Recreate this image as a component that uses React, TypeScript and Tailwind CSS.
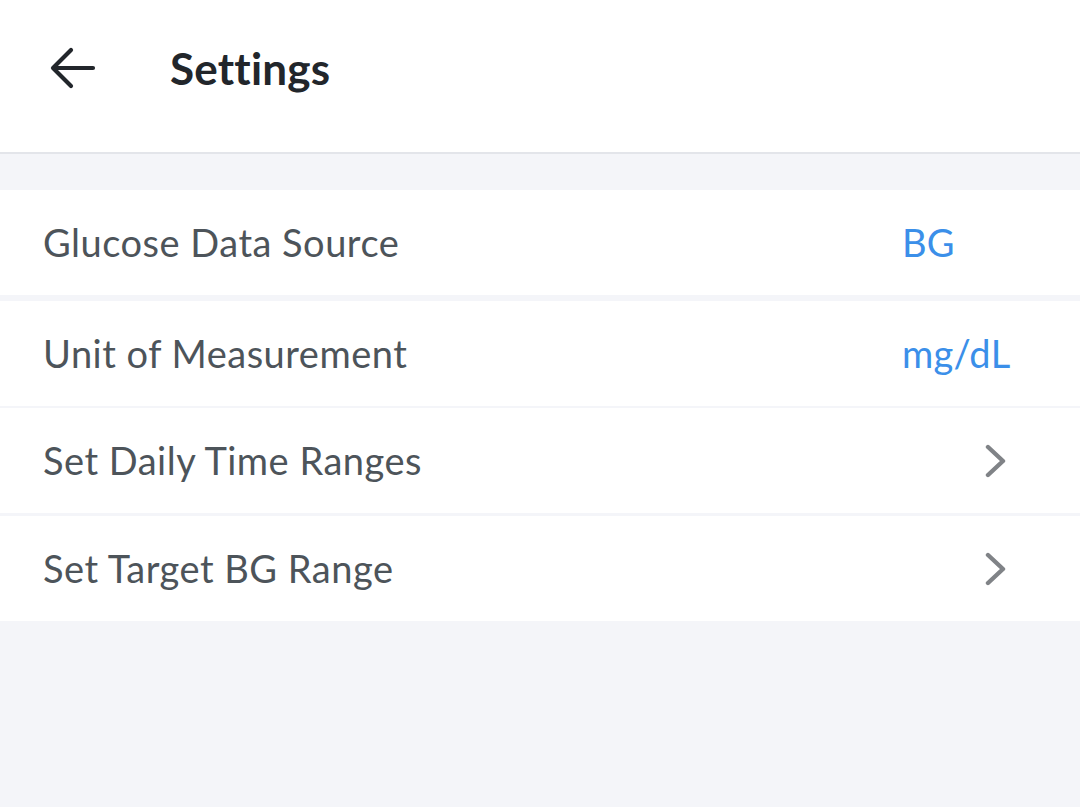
import React from 'react';

type Row = {
  label: string;
  value?: string;
};

const rows: Row[] = [
  { label: 'Glucose Data Source', value: 'BG' },
  { label: 'Unit of Measurement', value: 'mg/dL' },
  { label: 'Set Daily Time Ranges' },
  { label: 'Set Target BG Range' },
];

const BackArrow = () => (
  <svg width="46" height="42" viewBox="0 0 46 42" fill="none" aria-hidden="true">
    <path
      d="M43 21H4M21 3L3 21l18 18"
      stroke="#22262b"
      strokeWidth="4.2"
      strokeLinecap="round"
      strokeLinejoin="round"
    />
  </svg>
);

const Chevron = () => (
  <svg width="22" height="34" viewBox="0 0 22 34" fill="none" aria-hidden="true">
    <path
      d="M3 3l15 14L3 31"
      stroke="#808387"
      strokeWidth="4.4"
      strokeLinecap="round"
      strokeLinejoin="round"
    />
  </svg>
);

// Gap heights between the setting rows, as in the screen
const gaps = ['h-[6px]', 'h-[2px]', 'h-[3px]'];

export default function App() {
  return (
    <div className="w-[1080px] h-[807px] bg-[#f4f5f9] font-['Lato',sans-serif] overflow-hidden">
      <header className="h-[154px] bg-white border-b-2 border-[#e3e5ea] flex items-center">
        <button className="ml-[50px] mt-[-16px] flex items-center" aria-label="Back">
          <BackArrow />
        </button>
        <h1 className="ml-[74px] mt-[-16px] text-[44px] font-bold text-[#22262b] tracking-[0.2px]">
          Settings
        </h1>
      </header>

      <div className="mt-[36px]">
        {rows.map((row, i) => (
          <React.Fragment key={row.label}>
            <div className="h-[105px] bg-white flex items-center pl-[43px] pr-[74px]">
              <span className="flex-1 text-[38px] text-[#4d545a] tracking-[0.5px]">{row.label}</span>
              {row.value ? (
                <span className="w-[104px] text-[38px] text-[#3b8fe9] tracking-[0.3px]">{row.value}</span>
              ) : (
                <span className="w-[104px] flex justify-end mr-[-1px]">
                  <Chevron />
                </span>
              )}
            </div>
            {i < gaps.length && <div className={gaps[i]} />}
          </React.Fragment>
        ))}
      </div>
    </div>
  );
}
